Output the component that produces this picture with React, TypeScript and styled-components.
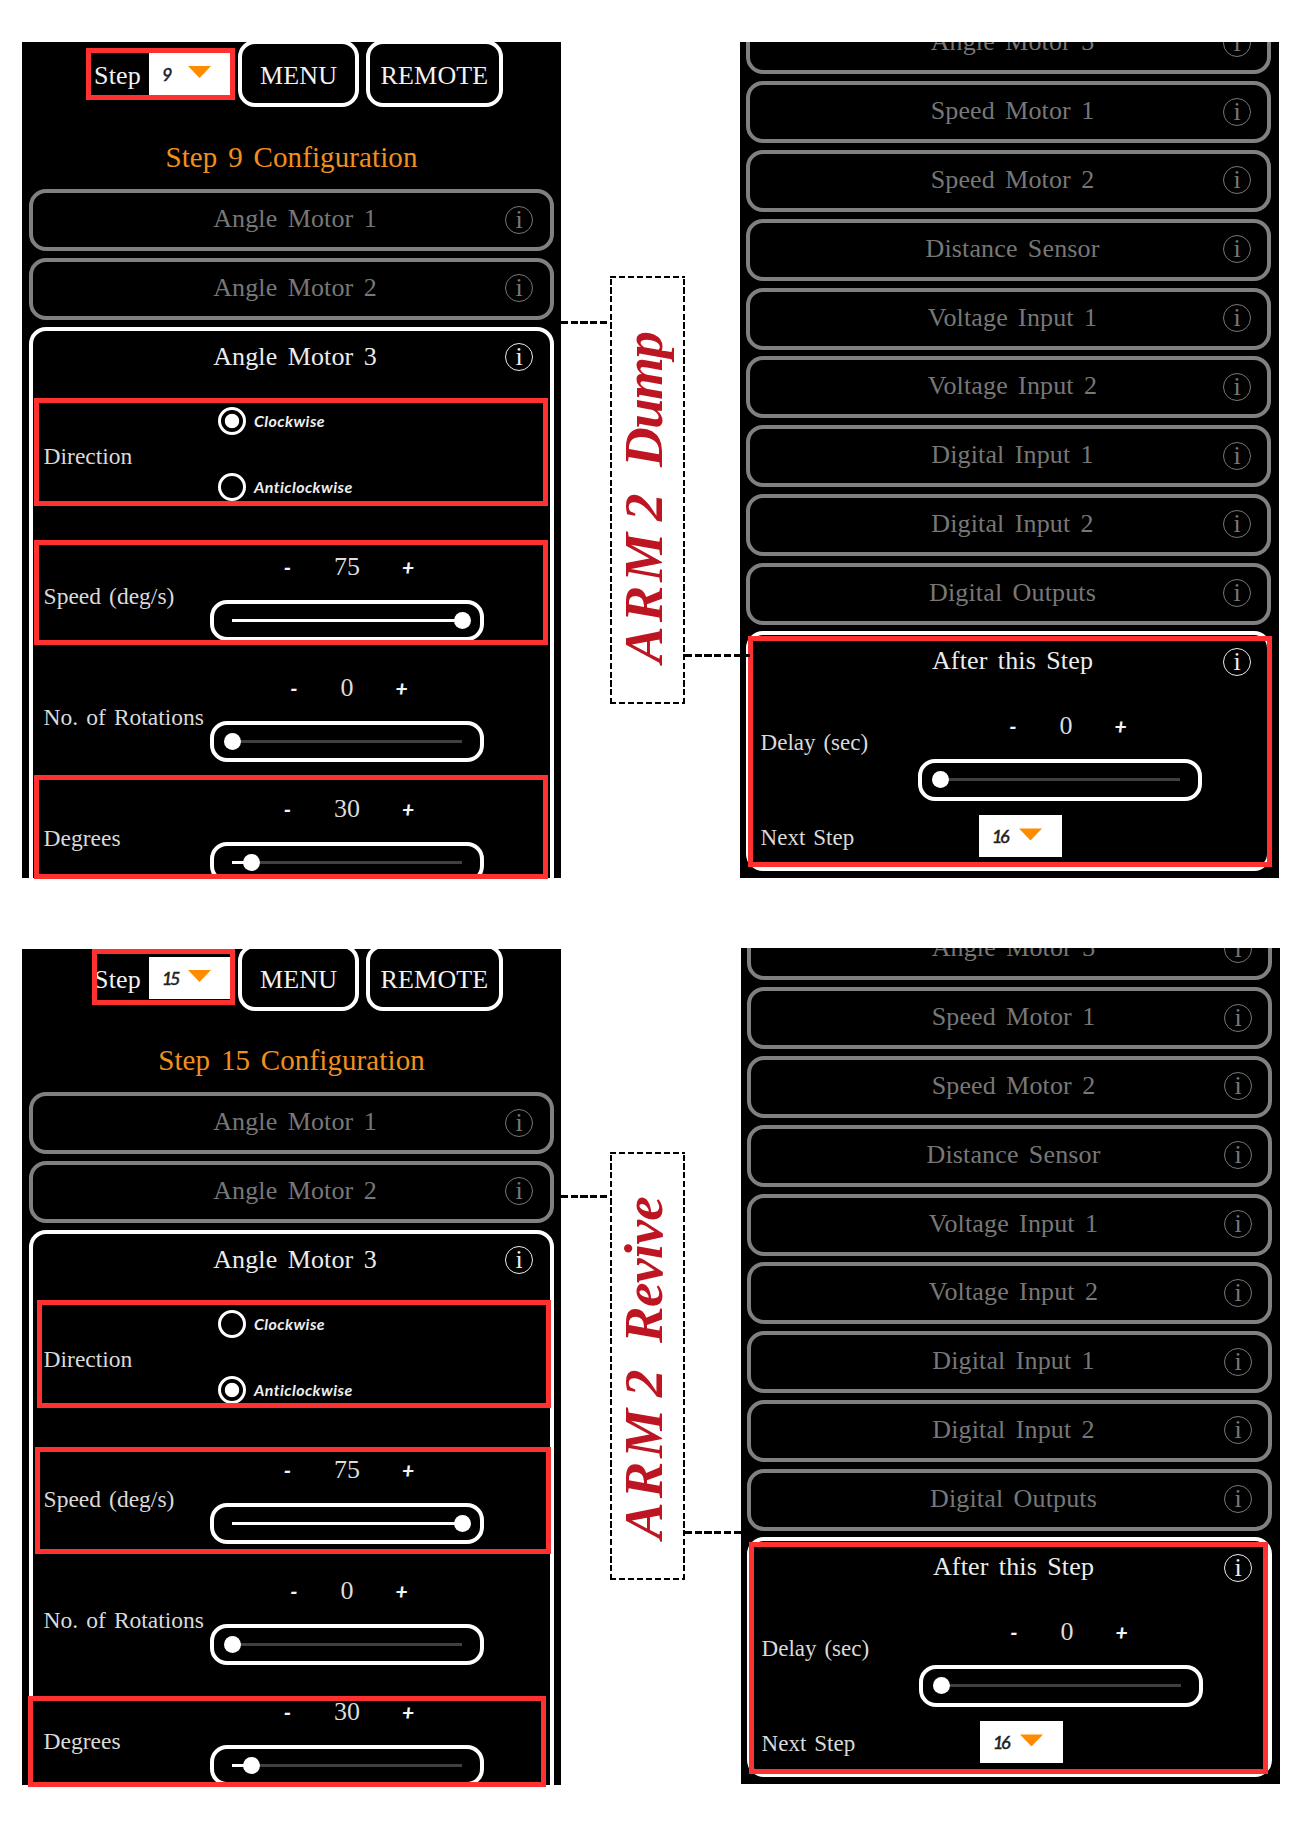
import React from "react";
import styled, { createGlobalStyle } from "styled-components";

const SERIF = `"Liberation Serif", "Times New Roman", serif`;
const HAND = `Lato, "Open Sans", sans-serif`;

const GlobalStyle = createGlobalStyle`
  * { box-sizing: border-box; }
  body { margin: 0; background: #fff; }
`;

const Page = styled.main`
  width: 1300px;
  height: 1830px;
  padding: 42px 0 0 22px;
  overflow: hidden;
  background: #fff;
  font-family: ${SERIF};
`;

const Group = styled.section<{ $gap?: number }>`
  display: flex;
  align-items: flex-start;
  height: 836px;
  margin-bottom: ${(p) => p.$gap ?? 0}px;
`;

const Frame = styled.div<{ $up?: number }>`
  position: relative;
  flex: none;
  width: 539px;
  margin-top: ${(p) => -(p.$up ?? 0)}px;
`;

const Screen = styled.div`
  height: 836px;
  overflow: hidden;
  background: #000;
  display: flex;
  flex-direction: column;
`;

const Content = styled.div<{ $shift: number; $left?: number; $right?: number }>`
  flex: none;
  margin-top: ${(p) => p.$shift}px;
  padding: 0 ${(p) => p.$right ?? 7}px 0 ${(p) => p.$left ?? 7}px;
`;

const TopBar = styled.header`
  display: flex;
  align-items: center;
  height: 67px;
  padding-left: 65px;
`;

const StepLabel = styled.span`
  width: 55px;
  padding-top: 4px;
  font-size: 26px;
  line-height: 30px;
  letter-spacing: 0.2px;
  color: #f2f2f2;
`;

const Select = styled.div<{ $width: number }>`
  display: flex;
  align-items: center;
  width: ${(p) => p.$width}px;
  height: 42px;
  padding-left: 13px;
  background: #fff;
`;

const SelectValue = styled.span<{ $width: number }>`
  width: ${(p) => p.$width}px;
  font: italic 500 18px/22px ${HAND};
  letter-spacing: -2.4px;
  -webkit-text-stroke: 0.4px #222;
  color: #222;
`;

const Caret = styled.i`
  width: 23px;
  height: 12px;
  margin-top: -3px;
  background: #ff8c00;
  clip-path: polygon(0 0, 100% 0, 50% 100%);
`;

const BarButton = styled.button<{ $width: number; $left: number; $spacing?: number }>`
  width: ${(p) => p.$width}px;
  height: 67px;
  margin: 0 0 0 ${(p) => p.$left}px;
  padding: 4px 0 0;
  border: 4px solid #fff;
  border-radius: 17px;
  background: #000;
  color: #f2f2f2;
  font: 26px/30px ${SERIF};
  letter-spacing: 0.15px;
`;

const Heading = styled.h1<{ $height: number }>`
  height: ${(p) => p.$height}px;
  margin: 0;
  padding-top: 17px;
  font-size: 29px;
  font-weight: 400;
  line-height: ${(p) => p.$height - 16}px;
  letter-spacing: 0.1px;
  word-spacing: 3.4px;
  text-align: center;
  color: #f0901e;
`;

const CardList = styled.div`
  display: flex;
  flex-direction: column;
  gap: 6.8px;
`;

const Card = styled.article<{ $active?: boolean; $height?: number }>`
  height: ${(p) => p.$height ?? 62}px;
  border: 4px solid ${(p) => (p.$active ? "#fff" : "#808080")};
  border-radius: 17px;
  color: ${(p) => (p.$active ? "#ececec" : "#777")};
`;

const CardHeader = styled.div<{ $end: number }>`
  display: grid;
  grid-template-columns: 52px 1fr ${(p) => p.$end}px;
  align-items: center;
  height: 54px;
`;

const CardTitle = styled.h2`
  grid-column: 2;
  margin: 0;
  padding-bottom: 2px;
  font-size: 26px;
  font-weight: 400;
  line-height: 30px;
  letter-spacing: 0.15px;
  word-spacing: 3.6px;
  text-align: center;
`;

const Info = styled.span`
  display: block;
  width: 28px;
  height: 28px;
  margin-top: -1px;
  border: 1.5px solid currentColor;
  border-radius: 50%;
  font-size: 26px;
  line-height: 26px;
  text-align: center;
`;

const Field = styled.div<{ $height: number; $columns: number }>`
  display: grid;
  grid-template-columns: ${(p) => p.$columns}px auto;
  height: ${(p) => p.$height}px;
  padding-left: 10px;
`;

const FieldLabel = styled.label<{ $top?: number; $bottom?: number; $size?: number }>`
  align-self: center;
  padding-top: ${(p) => p.$top ?? 0}px;
  padding-bottom: ${(p) => p.$bottom ?? 0}px;
  font-size: ${(p) => p.$size ?? 23.5}px;
  line-height: 28px;
  word-spacing: 2.2px;
  text-indent: 0.6px;
  white-space: nowrap;
  color: #dadada;
`;

const Controls = styled.div<{ $top: number }>`
  padding-top: ${(p) => p.$top}px;
`;

const RadioList = styled.div`
  display: flex;
  flex-direction: column;
  gap: 38px;
  padding: 22.7px 0 0 8px;
`;

const RadioRow = styled.div`
  display: flex;
  align-items: center;
  gap: 8px;
  height: 28px;
`;

const Radio = styled.i<{ $on?: boolean }>`
  width: 28px;
  height: 28px;
  border: 3px solid #fff;
  border-radius: 50%;
  background: ${(p) => (p.$on ? "radial-gradient(circle, #fff 6.8px, #000 7.6px)" : "#000")};
`;

const RadioText = styled.span`
  font: italic 700 16px/20px ${HAND};
  letter-spacing: 0.4px;
  color: #eee;
`;

const Stepper = styled.div<{ $width: number; $nudge?: number }>`
  display: flex;
  justify-content: center;
  align-items: center;
  gap: 41px;
  width: ${(p) => p.$width}px;
  height: 28px;
  padding-left: ${(p) => p.$nudge ?? 0}px;
`;

const Sign = styled.span`
  width: 12px;
  font: italic 900 21px/24px ${HAND};
  text-indent: 1px;
  text-align: center;
  color: #f4f4f4;
`;

const Amount = styled.output`
  font-size: 26px;
  line-height: 28px;
  color: #dcdcdc;
`;

const Slider = styled.div<{ $width: number; $top: number }>`
  display: flex;
  align-items: center;
  width: ${(p) => p.$width}px;
  height: 41.3px;
  margin-top: ${(p) => p.$top}px;
  padding: 0 18px;
  border: 4px solid #fff;
  border-radius: 17px;
`;

const Track = styled.div`
  flex: 1;
  display: flex;
  align-items: center;
  height: 3px;
  background: #404040;
`;

const Fill = styled.div`
  height: 3px;
  background: #fff;
`;

const Knob = styled.i`
  flex: none;
  width: 17px;
  height: 17px;
  margin: 0 -8.5px;
  border-radius: 50%;
  background: #fff;
`;

/* Red annotation frame laid over a screen. */
const Highlight = styled.div<{ $x: number; $y: number; $w: number; $h: number }>`
  position: absolute;
  left: ${(p) => p.$x}px;
  top: ${(p) => p.$y}px;
  width: ${(p) => p.$w}px;
  height: ${(p) => p.$h}px;
  border: 5px solid #ff3131;
`;

const Middle = styled.aside<{ $top: number; $width: number }>`
  position: relative;
  z-index: 1;
  flex: none;
  display: flex;
  align-items: flex-start;
  width: ${(p) => p.$width}px;
  padding-top: ${(p) => p.$top}px;
`;

const Connector = styled.div<{ $width: number; $top: number }>`
  flex: none;
  width: ${(p) => p.$width}px;
  height: 2.5px;
  margin-top: ${(p) => p.$top}px;
  background: repeating-linear-gradient(90deg, #000 0 7.2px, transparent 7.2px 9.7px);
`;

const dashX = "repeating-linear-gradient(90deg, #000 0 6.4px, transparent 6.4px 9px)";
const dashY = "repeating-linear-gradient(0deg, #000 0 6.2px, transparent 6.2px 8.73px)";

const Caption = styled.div<{ $height: number }>`
  flex: none;
  width: 75px;
  height: ${(p) => p.$height}px;
  background:
    ${dashX} top / 100% 2.3px no-repeat,
    ${dashX} bottom / 100% 2.3px no-repeat,
    ${dashY} left / 2.3px 100% no-repeat,
    ${dashY} right / 2.3px 100% no-repeat;
`;

const CaptionText = styled.p`
  display: flex;
  width: 75px;
  height: 100%;
  margin: 0;
  padding-top: 41px;
  writing-mode: vertical-rl;
  transform: rotate(180deg);
  font: italic 700 55px/67px ${SERIF};
  color: #bd1622;
  white-space: pre;
`;

const Word = styled.span<{ $spacing: number; $after?: number }>`
  letter-spacing: ${(p) => p.$spacing}px;
  margin-bottom: ${(p) => p.$after ?? 0}px;
`;

function TitledHeader({ title, end = 45 }: { title: string; end?: number }) {
  return (
    <CardHeader $end={end}>
      <CardTitle>{title}</CardTitle>
      <Info>i</Info>
    </CardHeader>
  );
}

interface RangeProps {
  value: number;
  ratio: number;
  width: number;
  top: number;
  gap: number;
  nudge?: number;
}

function Range({ value, ratio, width, top, gap, nudge }: RangeProps) {
  return (
    <Controls $top={top}>
      <Stepper $width={width} $nudge={nudge}>
        <Sign>-</Sign>
        <Amount>{value}</Amount>
        <Sign>+</Sign>
      </Stepper>
      <Slider $width={width} $top={gap}>
        <Track>
          <Fill style={{ width: `${ratio * 100}%` }} />
          <Knob />
        </Track>
      </Slider>
    </Controls>
  );
}

const ranges = [
  { label: "Speed (deg/s)", value: 75, ratio: 1 },
  { label: "No. of Rotations", value: 0, ratio: 0 },
  { label: "Degrees", value: 30, ratio: 0.085 },
];

interface ConfigProps {
  step: number;
  clockwise: boolean;
  shift: number;
  headingHeight: number;
}

function ConfigScreen({ step, clockwise, shift, headingHeight }: ConfigProps) {
  return (
    <Screen>
      <Content $shift={shift}>
        <TopBar>
          <StepLabel>Step</StepLabel>
          <Select $width={81}>
            <SelectValue $width={26}>{step}</SelectValue>
            <Caret />
          </Select>
          <BarButton $width={121} $left={8}>MENU</BarButton>
          <BarButton $width={137} $left={7}>REMOTE</BarButton>
        </TopBar>
        <Heading $height={headingHeight}>Step {step} Configuration</Heading>
        <CardList>
          <Card><TitledHeader title="Angle Motor 1" /></Card>
          <Card><TitledHeader title="Angle Motor 2" /></Card>
          <Card $active $height={620}>
            <TitledHeader title="Angle Motor 3" />
            <Field $height={135.6} $columns={167}>
              <FieldLabel $top={7}>Direction</FieldLabel>
              <RadioList>
                <RadioRow>
                  <Radio $on={clockwise} />
                  <RadioText>Clockwise</RadioText>
                </RadioRow>
                <RadioRow>
                  <Radio $on={!clockwise} />
                  <RadioText>Anticlockwise</RadioText>
                </RadioRow>
              </RadioList>
            </Field>
            {ranges.map((r) => (
              <Field key={r.label} $height={121.1} $columns={167}>
                <FieldLabel $top={31}>{r.label}</FieldLabel>
                <Range value={r.value} ratio={r.ratio} width={274} top={32.7} gap={19.1} />
              </Field>
            ))}
          </Card>
        </CardList>
      </Content>
    </Screen>
  );
}

const inputs = [
  "Angle Motor 3",
  "Speed Motor 1",
  "Speed Motor 2",
  "Distance Sensor",
  "Voltage Input 1",
  "Voltage Input 2",
  "Digital Input 1",
  "Digital Input 2",
  "Digital Outputs",
];

const NextStep = styled.div`
  padding: 14.4px 0 0 61px;
`;

function OutcomeScreen() {
  return (
    <Screen>
      <Content $shift={-29.7} $left={6} $right={8}>
        <CardList>
          {inputs.map((name) => (
            <Card key={name}><TitledHeader title={name} end={44} /></Card>
          ))}
          <Card $active $height={240}>
            <TitledHeader title="After this Step" end={44} />
            <Field $height={111} $columns={158}>
              <FieldLabel $bottom={5} $size={23}>Delay (sec)</FieldLabel>
              <Range value={0} ratio={0} width={284} top={22.4} gap={19.4} nudge={12} />
            </Field>
            <Field $height={67} $columns={158}>
              <FieldLabel $top={7.6} $size={23}>Next Step</FieldLabel>
              <NextStep>
                <Select $width={83}>
                  <SelectValue $width={27}>16</SelectValue>
                  <Caret />
                </Select>
              </NextStep>
            </Field>
          </Card>
        </CardList>
      </Content>
    </Screen>
  );
}

export default function App() {
  return (
    <>
      <GlobalStyle />
      <Page>
        <Group $gap={71}>
          <Frame>
            <ConfigScreen step={9} clockwise shift={-2} headingHeight={82} />
            <Highlight $x={64} $y={6} $w={149} $h={52} />
            <Highlight $x={12} $y={356} $w={514} $h={108} />
            <Highlight $x={12} $y={498} $w={514} $h={105} />
            <Highlight $x={12} $y={733} $w={514} $h={104} />
          </Frame>
          <Middle $top={234} $width={179}>
            <Connector $width={49} $top={45} />
            <Caption $height={428}>
              <CaptionText>
                <Word $spacing={4} $after={8}>ARM</Word>
                <Word $spacing={0} $after={26}>2</Word>
                <Word $spacing={-1.5}>Dump</Word>
              </CaptionText>
            </Caption>
            <Connector $width={67} $top={378} />
          </Middle>
          <Frame>
            <OutcomeScreen />
            <Highlight $x={8} $y={594} $w={524} $h={231} />
          </Frame>
        </Group>
        <Group>
          <Frame>
            <ConfigScreen step={15} clockwise={false} shift={-5} headingHeight={81} />
            <Highlight $x={70} $y={0} $w={143} $h={56} />
            <Highlight $x={15} $y={351} $w={514} $h={108} />
            <Highlight $x={13} $y={498} $w={516} $h={107} />
            <Highlight $x={6} $y={747} $w={518} $h={91} />
          </Frame>
          <Middle $top={203} $width={180}>
            <Connector $width={49} $top={43} />
            <Caption $height={428}>
              <CaptionText>
                <Word $spacing={4} $after={8}>ARM</Word>
                <Word $spacing={0} $after={26}>2</Word>
                <Word $spacing={-0.6}>Revive</Word>
              </CaptionText>
            </Caption>
            <Connector $width={56} $top={379} />
          </Middle>
          <Frame $up={1}>
            <OutcomeScreen />
            <Highlight $x={8} $y={594} $w={519} $h={232} />
          </Frame>
        </Group>
      </Page>
    </>
  );
}
